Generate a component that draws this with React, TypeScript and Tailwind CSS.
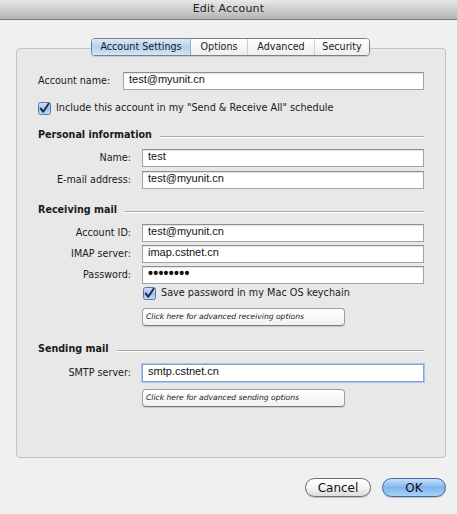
import React from "react";

const ui = { fontFamily: '"DejaVu Sans", "Noto Sans", sans-serif' };
const field = { fontFamily: '"Liberation Sans", Arial, sans-serif' };

function Input({ value, focused, dots }: { value: string; focused?: boolean; dots?: boolean }) {
  return (
    <div
      className={
        "h-[18px] w-[282px] bg-white flex items-center pl-[5px] text-[#111] leading-none " +
        (dots ? "text-[14px] " : "text-[11px] ") +
        (focused
          ? "border border-[#7fa6d6] shadow-[0_0_0_1px_#a9c6ea]"
          : "border border-[#a3a3a3] border-t-[#8e8e8e] shadow-[inset_0_1px_1px_rgba(0,0,0,0.12)]")
      }
      style={field}
    >
      <span className={dots ? "-mt-[4px] tracking-[0.3px] font-bold" : "-mt-[3px]"}>{value}</span>
    </div>
  );
}

function Row({ label, children, mt }: { label: string; children: React.ReactNode; mt: string }) {
  return (
    <div className={"flex items-center " + mt}>
      <div className="w-[104px] text-right pr-[11px] text-[9.6px] text-[#1a1a1a] whitespace-nowrap" style={ui}>
        {label}
      </div>
      {children}
    </div>
  );
}

function Check() {
  return (
    <svg width="13" height="13" viewBox="0 0 13 13" className="shrink-0">
      <defs>
        <linearGradient id="cb" x1="0" y1="0" x2="0" y2="1">
          <stop offset="0" stopColor="#d2e4f8" />
          <stop offset="0.5" stopColor="#9fc2ea" />
          <stop offset="1" stopColor="#c4dbf5" />
        </linearGradient>
      </defs>
      <rect x="0.5" y="0.5" width="12" height="12" rx="2" fill="url(#cb)" stroke="#567aa8" />
      <path d="M2.8 6.6 L5.3 9.8 L10.6 1.8" fill="none" stroke="#1b2f4e" strokeWidth="2" strokeLinecap="round" strokeLinejoin="round" />
    </svg>
  );
}

function Section({ title, mt }: { title: string; mt: string }) {
  return (
    <div className={"flex items-center h-[14px] pr-[21px] " + mt}>
      <span className="text-[9.6px] font-bold text-[#1a1a1a] whitespace-nowrap" style={ui}>
        {title}
      </span>
      <div className="flex-1 ml-[8px] mt-[4px] border-t border-[#a5a5a5] border-b border-b-white h-0" />
    </div>
  );
}

function AdvButton({ text, mt }: { text: string; mt: string }) {
  return (
    <div className={"flex " + mt}>
      <div className="ml-[104px] w-[203px] h-[18px] rounded-[4px] border border-[#9d9d9d] border-b-[#7c7c7c] bg-gradient-to-b from-white to-[#f1f1f1] shadow-[0_1px_1px_rgba(0,0,0,0.15)] flex items-center pl-[3px]">
        <span className="italic text-[7.6px] text-[#222]" style={ui}>
          {text}
        </span>
      </div>
    </div>
  );
}

export default function App() {
  return (
    <div className="w-[458px] h-[514px] bg-[#f0f0f0] flex flex-col border-r border-[#d0d0d0] overflow-hidden">
      {/* Title bar */}
      <div className="h-[20px] shrink-0 bg-gradient-to-b from-[#e9e9e9] to-[#b4b4b4] border-b border-[#7b7b7b] flex items-center justify-center">
        <span className="text-[11px] text-[#222] tracking-[0.2px]" style={ui}>
          Edit Account
        </span>
      </div>

      {/* Tabs */}
      <div className="mt-[18px] flex justify-start pl-[91px] relative z-10">
        <div className="flex h-[18px] rounded-[4px] border border-[#7f7f7f] overflow-hidden shadow-[0_1px_1px_rgba(0,0,0,0.12)] text-[9.6px] text-[#1a1a1a]" style={ui}>
          <div className="w-[99px] flex items-center justify-center bg-gradient-to-b from-[#dbe9f9] via-[#b3d0f0] to-[#d4e6f9] border-r border-[#9aa9bb]">
            Account Settings
          </div>
          <div className="w-[57px] flex items-center justify-center bg-gradient-to-b from-white to-[#eeeeee] border-r border-[#cfcfcf]">
            Options
          </div>
          <div className="w-[67px] flex items-center justify-center bg-gradient-to-b from-white to-[#eeeeee] border-r border-[#cfcfcf]">
            Advanced
          </div>
          <div className="w-[54px] flex items-center justify-center bg-gradient-to-b from-white to-[#eeeeee]">
            Security
          </div>
        </div>
      </div>

      {/* Box */}
      <div className="mt-[-8px] ml-[16px] w-[430px] h-[410px] rounded-[4px] border border-[#c3c3c3] bg-[#e8e8e8] flex flex-col pl-[21px]">
        <div className="flex items-center mt-[23px]">
          <div className="w-[85px] text-[9.6px] text-[#1a1a1a] whitespace-nowrap" style={ui}>
            Account name:
          </div>
          <div
            className="h-[18px] w-[301px] bg-white flex items-center pl-[5px] text-[11px] text-[#111] leading-none border border-[#a3a3a3] border-t-[#8e8e8e] shadow-[inset_0_1px_1px_rgba(0,0,0,0.12)]"
            style={field}
          >
            <span className="-mt-[3px]">test@myunit.cn</span>
          </div>
        </div>

        <div className="flex items-center mt-[12px] h-[13px]">
          <Check />
          <span className="ml-[5px] text-[9.7px] text-[#1a1a1a] whitespace-nowrap" style={ui}>
            Include this account in my "Send &amp; Receive All" schedule
          </span>
        </div>

        <Section title="Personal information" mt="mt-[13px]" />
        <Row label="Name:" mt="mt-[7px]">
          <Input value="test" />
        </Row>
        <Row label="E-mail address:" mt="mt-[4px]">
          <Input value="test@myunit.cn" />
        </Row>

        <Section title="Receiving mail" mt="mt-[14px]" />
        <Row label="Account ID:" mt="mt-[7px]">
          <Input value="test@myunit.cn" />
        </Row>
        <Row label="IMAP server:" mt="mt-[3px]">
          <Input value="imap.cstnet.cn" />
        </Row>
        <Row label="Password:" mt="mt-[3px]">
          <Input value="••••••••" dots />
        </Row>
        <div className="flex items-center mt-[3px] h-[13px] pl-[105px]">
          <Check />
          <span className="ml-[5px] text-[9.7px] text-[#1a1a1a] whitespace-nowrap" style={ui}>
            Save password in my Mac OS keychain
          </span>
        </div>
        <AdvButton text="Click here for advanced receiving options" mt="mt-[8px]" />

        <Section title="Sending mail" mt="mt-[16px]" />
        <Row label="SMTP server:" mt="mt-[8px]">
          <Input value="smtp.cstnet.cn" focused />
        </Row>
        <AdvButton text="Click here for advanced sending options" mt="mt-[7px]" />
      </div>

      {/* Buttons */}
      <div className="mt-[20px] flex justify-end pr-[11px] gap-[11px]">
        <div
          className="w-[66px] h-[19px] rounded-full border border-[#6f6f6f] bg-gradient-to-b from-white via-[#f4f4f4] to-[#dcdcdc] shadow-[0_1px_1px_rgba(0,0,0,0.2)] flex items-center justify-center text-[12px] text-[#111]"
          style={ui}
        >
          Cancel
        </div>
        <div
          className="w-[64px] h-[19px] rounded-full border border-[#41679a] bg-gradient-to-b from-[#c9e1fa] via-[#7fb5ee] to-[#a9d2f8] shadow-[0_1px_1px_rgba(0,0,0,0.2)] flex items-center justify-center text-[12px] text-[#111]"
          style={ui}
        >
          OK
        </div>
      </div>
    </div>
  );
}
